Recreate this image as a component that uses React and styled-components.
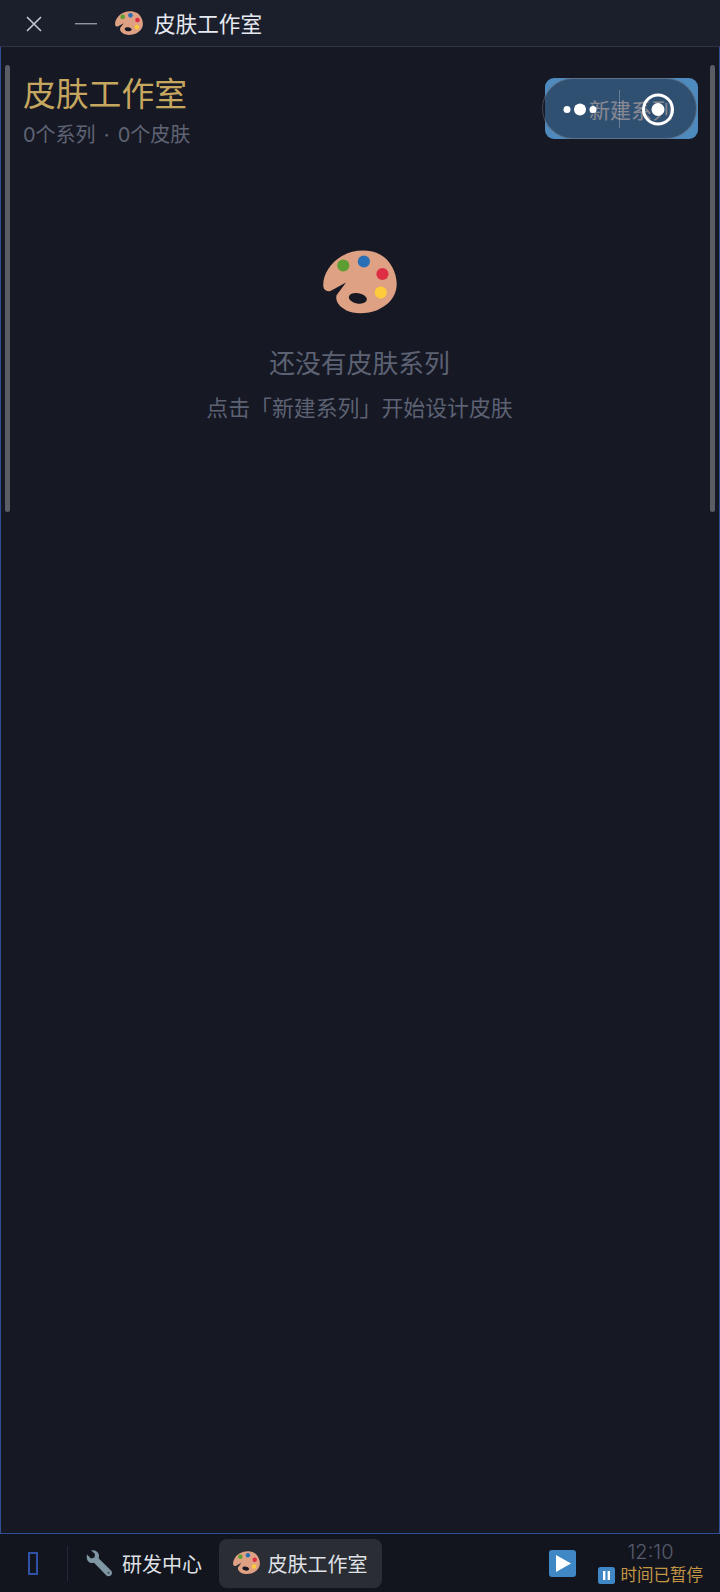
import React from "react";
import styled, { createGlobalStyle } from "styled-components";

const GlobalStyle = createGlobalStyle`
  html, body {
    margin: 0;
    padding: 0;
    background: #161824;
  }
  * {
    box-sizing: border-box;
  }
`;

const Page = styled.div`
  position: relative;
  width: 720px;
  height: 1592px;
  display: flex;
  flex-direction: column;
  overflow: hidden;
  background: #161824;
  font-family: Inter, "Noto Sans CJK SC", sans-serif;
`;

// top window bar
const TitleBar = styled.div`
  height: 47px;
  flex-shrink: 0;
  display: flex;
  align-items: center;
  padding-left: 25px;
  background: #1b1f2c;
  border-bottom: 1px solid #2d3444;
`;

const BarIcon = styled.svg`
  display: block;
  flex-shrink: 0;
  margin-top: 2px;
`;

const MinusIcon = styled(BarIcon)`
  margin-left: 32px;
  margin-right: 18px;
`;

const WindowTitle = styled.div`
  margin-left: 11px;
  margin-bottom: 2px;
  font-size: 21.6px;
  color: #e6e9f0;
`;

// main panel, blue frame
const Panel = styled.div`
  position: relative;
  flex: 1;
  display: flex;
  flex-direction: column;
  border: solid #2f4f95;
  border-width: 0 1px 1px 1.5px;
  padding: 0 22px;
`;

const ScrollThumb = styled.div`
  position: absolute;
  top: 18px;
  ${({ $side }) => ($side === "left" ? "left: 4px;" : "right: 4px;")}
  width: 5px;
  height: 447px;
  border-radius: 3px;
  background: #5b5c64;
`;

const Header = styled.div`
  display: flex;
  justify-content: space-between;
  align-items: flex-start;
  padding-top: 31px;
`;

const TitleBlock = styled.div`
  margin-top: -1px;
`;

const Heading = styled.h1`
  margin: 0;
  font-size: 32.8px;
  line-height: 34px;
  font-weight: 400;
  color: #c6a75f;
`;

const SubHeading = styled.div`
  margin-top: 11px;
  font-size: 20px;
  line-height: 26px;
  word-spacing: 2.5px;
  color: #5f6475;
`;

const NewButton = styled.div`
  width: 153px;
  height: 61px;
  margin-right: -1px;
  display: flex;
  align-items: center;
  padding-left: 44px;
  border-radius: 9px;
  background: #4f8abf;
  color: #fff;
  font-size: 21px;
`;

// floating capsule of the host app, lies over the button
const Capsule = styled.div`
  position: absolute;
  top: 78px;
  left: 542px;
  width: 155px;
  height: 61px;
  border-radius: 31px;
  border: 1.5px solid rgba(255, 255, 255, 0.2);
  background: rgba(21, 27, 45, 0.52);
`;

const CapsuleGlyphs = styled.svg`
  position: absolute;
  top: -1.5px;
  left: -1.5px;
`;

const Empty = styled.div`
  display: flex;
  flex-direction: column;
  align-items: center;
  padding-top: 102px;
  margin-left: -1px;
`;

const EmptyTitle = styled.div`
  margin-top: 32px;
  font-size: 25.8px;
  line-height: 36px;
  color: #5c6273;
`;

const EmptyHint = styled.div`
  margin-top: 10px;
  font-size: 21.9px;
  line-height: 32px;
  color: #5c6273;
`;

// bottom task bar
const TaskBar = styled.div`
  height: 58px;
  flex-shrink: 0;
  display: flex;
  align-items: center;
  background: #13151e;
  padding-right: 17px;
`;

const Tofu = styled.div`
  width: 10px;
  height: 23px;
  margin-left: 28px;
  border: 2px solid #2f52a8;
`;

const Divider = styled.div`
  width: 1px;
  height: 35px;
  margin-left: 29px;
  margin-right: 18px;
  background: #262934;
`;

const TaskItem = styled.div`
  display: flex;
  align-items: center;
  gap: ${({ $active }) => ($active ? "7.5px" : "9px")};
  height: 49px;
  font-size: 20px;
  white-space: nowrap;
  color: #dfe1e6;
  ${({ $active }) =>
    $active
      ? `
    width: 163px;
    padding-left: 14px;
    margin-left: 17px;
    border-radius: 8px;
    background: #2b2d34;
  `
      : ""}
`;

const PlayButton = styled.svg`
  display: block;
  flex-shrink: 0;
  margin-left: auto;
`;

const Clock = styled.div`
  display: flex;
  flex-direction: column;
  align-items: flex-end;
  flex-shrink: 0;
  margin-left: 22px;
  width: 105px;
`;

const Time = styled.div`
  align-self: center;
  font-size: 20px;
  font-weight: 300;
  line-height: 24px;
  color: #565b6c;
`;

const Paused = styled.div`
  display: flex;
  align-items: center;
  gap: 6px;
  font-size: 16.5px;
  line-height: 22px;
  white-space: nowrap;
  color: #c39545;
`;

const Palette = ({ size }) => (
  <svg width={size} height={(size * 190) / 219} viewBox="40 34 219 190" style={{ display: "block", flexShrink: 0 }}>
    <path
      d="M41 142 C38 112 60 72 96 52 C130 32 178 30 210 48 C240 64 260 104 258 140 C256 172 234 198 200 212 C170 224 130 224 108 212 C88 202 76 186 80 168 L108 130 L62 155 C50 158 42 152 41 142 Z"
      fill="#dea183"
    />
    <ellipse cx="143" cy="177" rx="27" ry="15.5" transform="rotate(10 143 177)" fill="#161824" />
    <circle cx="100" cy="80" r="18" fill="#5c9e31" />
    <circle cx="161" cy="68" r="18" fill="#2a6fb5" />
    <circle cx="216" cy="105" r="18" fill="#dd2e44" />
    <circle cx="211" cy="160" r="18" fill="#fdcb3b" />
  </svg>
);

const Wrench = () => (
  <svg width="27" height="27" viewBox="0 0 27 27" style={{ display: "block", flexShrink: 0 }}>
    <path
      d="M1 4.5 L5 8.5 L8.5 7.5 L9 4 L5.2 0.6 C8.5 -0.4 12 1.4 12.8 4.6 C13.2 6 13 7.2 12.6 8.2 L25 20.4 C26.4 21.8 26.4 23.8 25 25.2 C23.6 26.6 21.6 26.6 20.2 25.2 L8 12.8 C6.8 13.2 5.4 13.2 4 12.8 C1.4 11.8 0 8 1 4.5 Z"
      fill="#7f97a3"
    />
    <circle cx="22.6" cy="22.8" r="1.2" fill="#4e616b" />
  </svg>
);

const App = () => {
  return (
    <Page>
      <GlobalStyle />
      <TitleBar>
        <BarIcon width="18" height="18" viewBox="0 0 18 18">
          <path d="M2 2 L16 16 M16 2 L2 16" stroke="#c3c7d0" strokeWidth="1.6" fill="none" />
        </BarIcon>
        <MinusIcon width="22" height="2" viewBox="0 0 22 2">
          <rect width="22" height="1.4" fill="#8f94a0" />
        </MinusIcon>
        <Palette size={28} />
        <WindowTitle>皮肤工作室</WindowTitle>
      </TitleBar>

      <Panel>
        <ScrollThumb $side="left" />
        <ScrollThumb $side="right" />
        <Header>
          <TitleBlock>
            <Heading>皮肤工作室</Heading>
            <SubHeading>0个系列 · 0个皮肤</SubHeading>
          </TitleBlock>
          <NewButton>新建系列</NewButton>
        </Header>
        <Empty>
          <Palette size={74} />
          <EmptyTitle>还没有皮肤系列</EmptyTitle>
          <EmptyHint>点击「新建系列」开始设计皮肤</EmptyHint>
        </Empty>
      </Panel>

      <TaskBar>
        <Tofu />
        <Divider />
        <TaskItem>
          <Wrench />
          研发中心
        </TaskItem>
        <TaskItem $active>
          <Palette size={27} />
          皮肤工作室
        </TaskItem>
        <PlayButton width="27" height="27" viewBox="0 0 27 27">
          <rect width="27" height="27" rx="3" fill="#3f88c5" />
          <path d="M7 5 L22 13.5 L7 22 Z" fill="#fff" />
        </PlayButton>
        <Clock>
          <Time>12:10</Time>
          <Paused>
            <svg width="17" height="17" viewBox="0 0 17 17" style={{ display: "block" }}>
              <rect width="17" height="17" rx="2.5" fill="#3f88c5" />
              <rect x="5" y="4" width="2.4" height="9" fill="#fff" />
              <rect x="9.6" y="4" width="2.4" height="9" fill="#fff" />
            </svg>
            时间已暂停
          </Paused>
        </Clock>
      </TaskBar>

      <Capsule>
        <CapsuleGlyphs width="155" height="61" viewBox="0 0 155 61">
          <circle cx="25" cy="31.5" r="3.5" fill="#fff" />
          <circle cx="38" cy="31.5" r="6" fill="#fff" />
          <circle cx="51" cy="31.5" r="3.5" fill="#fff" />
          <rect x="77" y="12" width="1" height="38" fill="rgba(255,255,255,0.25)" />
          <circle cx="116" cy="31.5" r="14.5" stroke="#fff" strokeWidth="3" fill="none" />
          <circle cx="116" cy="31.5" r="6.5" fill="#fff" />
        </CapsuleGlyphs>
      </Capsule>
    </Page>
  );
};

export default App;
